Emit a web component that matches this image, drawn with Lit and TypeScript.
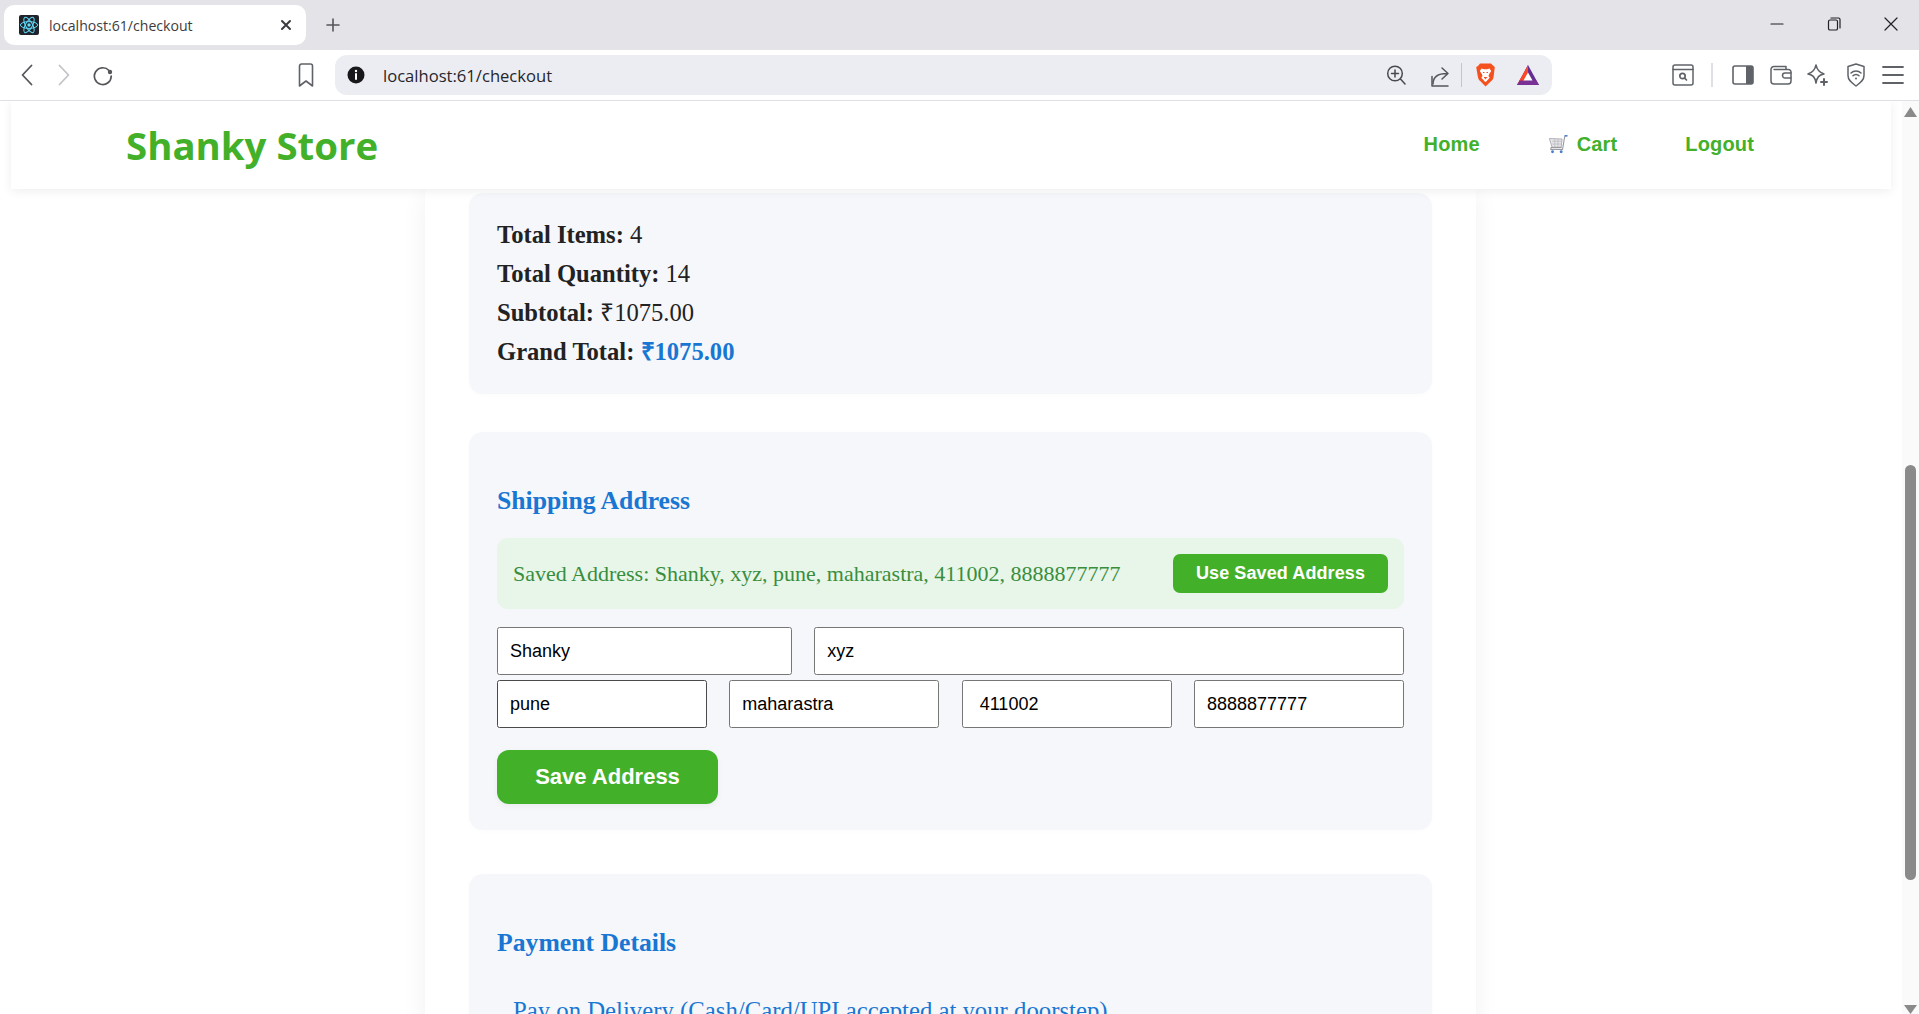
import { LitElement, html, css, svg } from "lit";
import { customElement } from "lit/decorators.js";

const reactIcon = html`<svg class="fav" viewBox="0 0 20 20">
  <rect width="20" height="20" rx="2" fill="#20232a"/>
  <g fill="none" stroke="#61dafb" stroke-width="1">
    <ellipse cx="10" cy="10" rx="8.6" ry="3.4"/>
    <ellipse cx="10" cy="10" rx="8.6" ry="3.4" transform="rotate(60 10 10)"/>
    <ellipse cx="10" cy="10" rx="8.6" ry="3.4" transform="rotate(120 10 10)"/>
  </g>
  <circle cx="10" cy="10" r="1.7" fill="#61dafb"/>
</svg>`;

const s = (w: number, h: number, body: unknown, cls = "") =>
  html`<svg class=${cls} width=${w} height=${h} viewBox="0 0 ${w} ${h}" fill="none" stroke="#5f6368" stroke-width="1.5" stroke-linecap="round" stroke-linejoin="round">${body}</svg>`;

@customElement("app-root")
export class AppRoot extends LitElement {
  static styles = css`
    :host { display: block; width: 1919px; height: 1014px; overflow: hidden; background: #fff; font-family: "Liberation Serif", serif; }
    svg { display: block; flex: none; }
    .tabstrip { height: 50px; background: #e3e3e8; display: flex; align-items: flex-start; padding-left: 4px; box-sizing: border-box; }
    .tab { width: 302px; height: 40px; margin-top: 5px; background: #fff; border-radius: 10px; display: flex; align-items: center; padding: 0 14px 0 15px; box-sizing: border-box; }
    .fav { width: 20px; height: 20px; }
    .tabtitle { font: 14.1px "Open Sans", sans-serif; color: #3c3c40; margin-left: 10px; flex: 1; white-space: nowrap; }
    .newtab { margin-left: 20px; margin-top: 18px; }
    .winctl { margin-left: auto; display: flex; align-items: center; gap: 43px; margin-top: 17px; padding-right: 21px; }
    .toolbar { height: 51px; border-bottom: 1px solid #e0e0e4; box-sizing: border-box; display: flex; align-items: center; background: #fff; }
    .nav-btns { display: flex; align-items: center; width: 335px; box-sizing: border-box; padding-left: 21px; }
    .sp-25 { width: 25px; }
    .sp-22 { width: 22px; }
    .sp-184 { width: 184px; }
    .sp-24 { width: 24px; }
    .sp-11 { width: 11px; }
    .sp-14 { width: 14px; }
    .sp-17 { width: 17px; }
    .sp-18 { width: 18px; }
    .sp-19 { width: 19px; }
    .sp-16 { width: 16px; }
    .omni-sep { width: 1px; height: 24px; background: #c4c5c9; }
    .tool-sep { width: 2px; height: 24px; background: #e0e0e4; }
    .omni { width: 1217px; height: 40px; background: #ecedf2; border-radius: 12px; display: flex; align-items: center; box-sizing: border-box; padding: 0 13px 0 12px; }
    .url { font: 16.6px "Open Sans", sans-serif; color: #26262a; margin-left: 18px; flex: 1; white-space: nowrap; }
    .right-icons { display: flex; align-items: center; margin-left: 120px; }
    .page { display: flex; height: 913px; }
    .main { flex: 1; min-width: 0; height: 913px; overflow: hidden; }
    .navbar { position: relative; z-index: 2; height: 88px; margin: 0 11px; background: #fff; box-shadow: 0 2px 10px rgba(0,0,0,.07); display: flex; align-items: center; box-sizing: border-box; padding: 0 137px 0 115px; }
    .logo { font: 700 38.4px "Open Sans", sans-serif; color: #43b02a; }
    .links { margin-left: auto; display: flex; align-items: center; gap: 68px; font: 700 20px "Liberation Sans", sans-serif; color: #43b02a; letter-spacing: .15px; margin-top: -2px; }
    .cart { display: flex; align-items: center; gap: 9px; }
    .card { width: 1051px; margin-left: 425px; height: 900px; box-sizing: border-box; padding: 4px 44px 0; background: #fff; box-shadow: 0 4px 24px rgba(0,0,0,.06); }
    .panel { background: #f5f7fa; border-radius: 14px; padding: 0 28px; box-shadow: 0 1px 4px rgba(0,0,0,.02); }
    .p1 { height: 201px; box-sizing: border-box; padding-top: 22px; margin-bottom: 38px; }
    .line { font-size: 24.6px; line-height: 39px; color: #222; }
    .line b { font-weight: 700; }
    .grand { color: #1976d2; font-weight: 700; }
    .p2 { height: 398px; box-sizing: border-box; padding-top: 53px; margin-bottom: 44px; }
    h3 { margin: 0; font-size: 25.7px; line-height: 32px; font-weight: 700; color: #1976d2; }
    .saved { margin-top: 21px; height: 71px; box-sizing: border-box; background: #e8f5e9; border-radius: 11px; display: flex; align-items: center; padding: 0 16px; justify-content: space-between; }
    .saved span { font-size: 22px; color: #388e3c; }
    .use { width: 215px; height: 39px; box-sizing: border-box; border: 0; border-radius: 7px; background: #43b02a; color: #fff; font: 700 18px "Liberation Sans", sans-serif; letter-spacing: .1px; padding: 0; }
    .row { display: grid; column-gap: 22.4px; }
    .r1 { margin-top: 18px; grid-template-columns: 1fr 2fr; }
    .r2 { margin-top: 5px; grid-template-columns: repeat(4, 1fr); }
    input { font: 18px "Liberation Sans", sans-serif; color: #000; background: #fff; border: 1px solid #767676; border-radius: 2.5px; box-sizing: border-box; height: 48px; padding: 0 12px; min-width: 0; width: 100%; outline: none; }
    input.dark { border-color: #4a4a4a; }
    .save { display: block; margin-top: 22px; width: 221px; height: 54px; border: 0; border-radius: 12px; background: #43b02a; color: #fff; font: 700 22px "Liberation Sans", sans-serif; box-shadow: 0 2px 6px rgba(0,0,0,.05); padding: 0; }
    .p3 { height: 300px; box-sizing: border-box; padding-top: 53px; }
    .pay { margin-top: 37px; padding-left: 16px; font-size: 24.75px; line-height: 30px; color: #1976d2; white-space: nowrap; }
    .scroll { width: 17px; flex: none; height: 913px; background: #fafafa; display: flex; flex-direction: column; align-items: center; box-sizing: border-box; padding: 6px 0 0; }
    .thumb { width: 11px; height: 415px; background: #8a8a8a; border-radius: 6px; margin-top: 348px; }
    .arrow-down { margin-top: auto; }
  `;

  render() {
    return html`
      <div class="tabstrip">
        <div class="tab">
          ${reactIcon}
          <span class="tabtitle">localhost:61/checkout</span>
          ${s(12, 12, svg`<path d="M2 2l8 8M10 2l-8 8" stroke="#3c3c40" stroke-width="2"/>`)}
        </div>
        ${s(14, 14, svg`<path d="M7 1v12M1 7h12" stroke="#55565a" stroke-width="1.6"/>`, "newtab")}
        <div class="winctl">
          ${s(14, 14, svg`<path d="M1 7h12" stroke="#222" stroke-width="1.2"/>`)}
          ${s(14, 14, svg`<rect x="1.5" y="3" width="9" height="10" rx="1.6" stroke="#222" stroke-width="1.2"/><path d="M4 1h7.5a1.5 1.5 0 0 1 1.5 1.5V11" stroke="#222" stroke-width="1.2"/>`)}
          ${s(14, 14, svg`<path d="M1 1l12 12M13 1L1 13" stroke="#222" stroke-width="1.2"/>`)}
        </div>
      </div>
      <div class="toolbar">
        <div class="nav-btns">
          ${s(12, 24, svg`<path d="M10.5 2.5L1.5 12l9 9.5" stroke="#55565a" stroke-width="1.8"/>`)}
          <span class="sp-25"></span>
          ${s(12, 24, svg`<path d="M1.5 2.5l9 9.5-9 9.5" stroke="#c4c4c8" stroke-width="1.8"/>`)}
          <span class="sp-22"></span>
          ${s(22, 22, svg`<path d="M17 6.5A8.4 8.4 0 1 0 19.2 12" stroke="#55565a" stroke-width="1.7"/><circle cx="18" cy="8" r="2.2" fill="#55565a" stroke="none"/>`)}
          <span class="sp-184"></span>
          ${s(16, 24, svg`<path d="M1.5 3a2 2 0 0 1 2-2h9a2 2 0 0 1 2 2v20l-6.500-5-6.500 5z" stroke-width="1.6"/>`)}
        </div>
        <div class="omni">
          ${s(18, 18, svg`<circle cx="9" cy="9" r="8.500" fill="#18181b" stroke="none"/><path d="M9 8v5" stroke="#fff" stroke-width="2"/><circle cx="9" cy="5" r="1.200" fill="#fff" stroke="none"/>`)}
          <span class="url">localhost:61/checkout</span>
          ${s(20, 22, svg`<circle cx="9" cy="9.500" r="7.300" stroke="#4a4a4e"/><path d="M5.500 9.500h7M9 6v7M14.500 15l4.500 5" stroke="#4a4a4e"/>`)}
          <span class="sp-24"></span>
          ${s(20, 24, svg`<path d="M2 13.500V23h16" stroke="#55565a"/><path d="M3 21c0-7 4-10.500 14-10.500M12 5l6 5.500-6 5.500" stroke="#55565a"/>`)}
          <span class="sp-11"></span>
          <span class="omni-sep"></span>
          <span class="sp-14"></span>
          <svg width="19" height="24" viewBox="0 0 19 24">
            <path d="M4 .5h11l2.500 2.500 1.300 1-1.200 10c-.3 2-1.200 3.200-2.600 4.300L9.500 23.500 4.500 18.300C3.100 17.200 2.200 16 1.900 14L.2 4l1.800-1z" fill="#f5511e"/>
            <path d="M5.500 5.500l2.500.7h3l2.500-.7 1.700 2.500-2 3-.7 2 1.200 1.700-3.700 4-.5.400-.5-.400-3.700-4 1.200-1.700-.7-2-2-3z" fill="#fff"/>
            <path d="M7 9.500h1.500M10.500 9.500H12M8.200 14.500h2.600l-1.300 1.300z" stroke="#f5511e" stroke-width="1" fill="#f5511e"/>
          </svg>
          <span class="sp-22"></span>
          <svg width="22" height="20" viewBox="0 0 22 20">
            <path d="M11 0L22 20H0z" fill="#662d91"/>
            <path d="M11 0L0 20h5.500L11 9.500z" fill="#ff4724"/>
            <path d="M0 20h22l-2.700-4.500H2.700z" fill="#7a3196"/>
            <path d="M11 7.500l4.500 8h-9z" fill="#fff"/>
          </svg>
        </div>
        <div class="right-icons">
          ${s(22, 22, svg`<rect x="1" y="1" width="20" height="20" rx="2"/><path d="M1 5.500h20"/><circle cx="10.500" cy="12" r="2.700" stroke-width="1.700"/><path d="M12.500 14l2 2" stroke-width="1.700"/>`)}
          <span class="sp-17"></span>
          <span class="tool-sep"></span>
          <span class="sp-19"></span>
          <svg width="22" height="20" viewBox="0 0 22 20"><rect x="1" y="1" width="20" height="18" rx="2" fill="none" stroke="#5f6368" stroke-width="1.600"/><path d="M14 1h5a2 2 0 0 1 2 2v14a2 2 0 0 1-2 2h-5z" fill="#5f6368"/></svg>
          <span class="sp-16"></span>
          ${s(22, 20, svg`<path d="M1 4.500a3 3 0 0 1 3-3h12v3H4M1 4v12a3 3 0 0 0 3 3h14a3 3 0 0 0 3-3V7a2.500 2.500 0 0 0-2.500-2.500H16"/><path d="M21 8h-6a2.500 2.500 0 0 0 0 5h6"/>`)}
          <span class="sp-14"></span>
          ${s(22, 24, svg`<path d="M10 2c1 5 3 7 8 9-5 1-7 3-8 9-1-6-3-8-8-9 5-2 7-4 8-9z" stroke-width="1.600"/><path d="M18 16v6M15 19h6" stroke-width="2"/>`)}
          <span class="sp-18"></span>
          ${s(20, 24, svg`<path d="M10 1l8 2.500v9c0 5-4 7.500-8 10.500-4-3-8-5.500-8-10.500v-9z"/><path d="M5 10a7 7 0 0 1 10 0M7 12.800a4 4 0 0 1 6 0"/><circle cx="10" cy="15.500" r="1" fill="#5f6368" stroke="none"/>`)}
          <span class="sp-16"></span>
          ${s(22, 20, svg`<path d="M1 2h20M1 10h20M1 18h20" stroke-width="1.800"/>`)}
        </div>
      </div>
      <div class="page">
        <div class="main">
          <div class="navbar">
            <div class="logo">Shanky Store</div>
            <div class="links">
              <span>Home</span>
              <span class="cart">
                <svg width="20" height="20" viewBox="0 0 21 22">
                  <path d="M1 5l14 .5-1 9H4z" fill="#e8e8ec" stroke="#a9a9b0" stroke-width="1"/>
                  <path d="M4 8h11M4 11h10M7 5.500v9M10.500 5.500v9" stroke="#b5b5bc" stroke-width=".8"/>
                  <path d="M14.500 15H3l-.5 2h13L18 2h2" fill="none" stroke="#9a9aa2" stroke-width="1.200"/>
                  <path d="M18 2h3" stroke="#3d7fd9" stroke-width="1.600"/>
                  <circle cx="4.500" cy="19.500" r="1.600" fill="#4f7fc9"/><circle cx="14" cy="19.500" r="1.600" fill="#4f7fc9"/>
                </svg>
                Cart
              </span>
              <span>Logout</span>
            </div>
          </div>
          <div class="card">
            <div class="panel p1">
              <div class="line"><b>Total Items:</b> 4</div>
              <div class="line"><b>Total Quantity:</b> 14</div>
              <div class="line"><b>Subtotal:</b> ₹1075.00</div>
              <div class="line"><b>Grand Total:</b> <span class="grand">₹1075.00</span></div>
            </div>
            <div class="panel p2">
              <h3>Shipping Address</h3>
              <div class="saved">
                <span>Saved Address: Shanky, xyz, pune, maharastra, 411002, 8888877777</span>
                <button class="use">Use Saved Address</button>
              </div>
              <div class="row r1">
                <input value="Shanky" />
                <input value="xyz" />
              </div>
              <div class="row r2">
                <input class="dark" value="pune" />
                <input value="maharastra" />
                <input value=" 411002" />
                <input value="8888877777" />
              </div>
              <button class="save">Save Address</button>
            </div>
            <div class="panel p3">
              <h3>Payment Details</h3>
              <div class="pay">Pay on Delivery (Cash/Card/UPI accepted at your doorstep)</div>
            </div>
          </div>
        </div>
        <div class="scroll">
          <svg width="13" height="10" viewBox="0 0 13 10"><path d="M6.500 0L13 10H0z" fill="#8a8a8a"/></svg>
          <div class="thumb"></div>
          <svg class="arrow-down" width="13" height="9" viewBox="0 0 13 9"><path d="M6.500 9L13 0H0z" fill="#8a8a8a"/></svg>
        </div>
      </div>
    `;
  }
}
